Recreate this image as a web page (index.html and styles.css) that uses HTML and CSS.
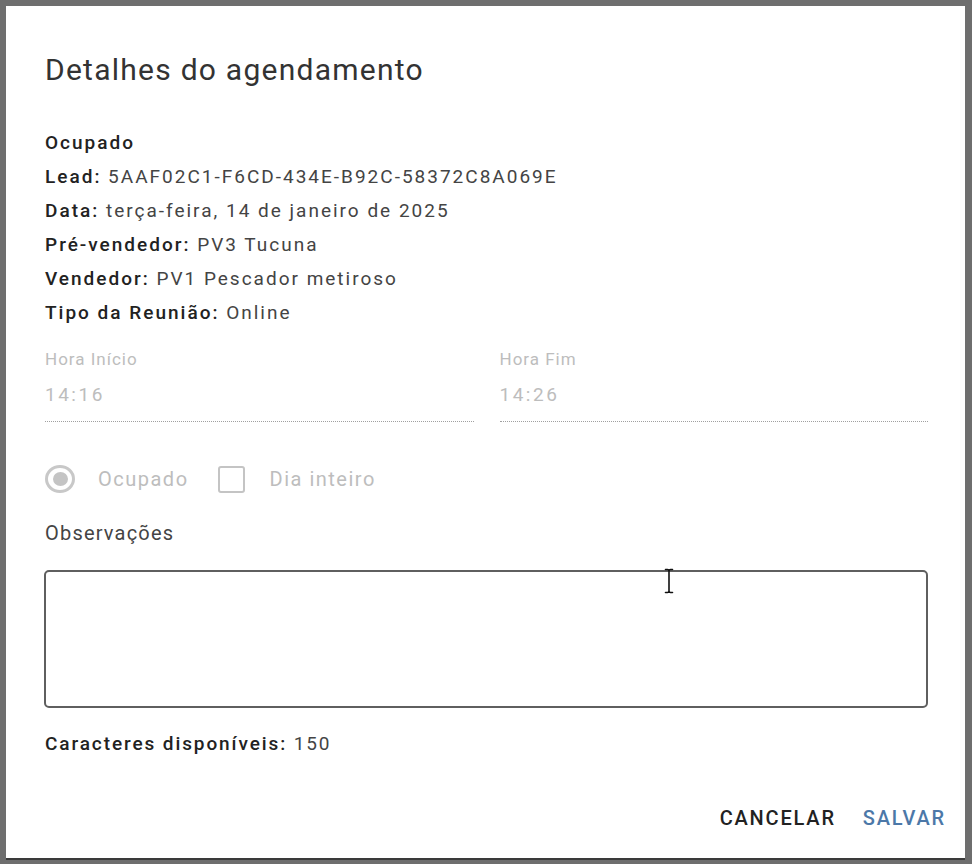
FILE: index.html
```html
<!DOCTYPE html>
<html lang="pt-BR">
<head>
<meta charset="utf-8">
<title>Detalhes do agendamento</title>
<link rel="stylesheet" href="styles.css">
</head>
<body>
<div class="dialog">
  <h1 class="title">Detalhes do agendamento</h1>
  <div class="info">
    <div class="line"><b>Ocupado</b></div>
    <div class="line"><b>Lead:</b> 5AAF02C1-F6CD-434E-B92C-58372C8A069E</div>
    <div class="line"><b>Data:</b> terça-feira, 14 de janeiro de 2025</div>
    <div class="line"><b>Pré-vendedor:</b> PV3 Tucuna</div>
    <div class="line"><b>Vendedor:</b> PV1 Pescador metiroso</div>
    <div class="line"><b>Tipo da Reunião:</b> Online</div>
  </div>
  <div class="times">
    <div class="field">
      <div class="field-label">Hora Início</div>
      <div class="field-value">14:16</div>
    </div>
    <div class="field">
      <div class="field-label">Hora Fim</div>
      <div class="field-value">14:26</div>
    </div>
  </div>
  <div class="options">
    <span class="radio"><span class="radio-dot"></span></span>
    <span class="opt-label">Ocupado</span>
    <span class="checkbox"></span>
    <span class="opt-label">Dia inteiro</span>
  </div>
  <div class="obs-label">Observações</div>
  <div class="textarea">
    <svg class="ibeam" width="10" height="26" viewBox="0 0 10 26" aria-hidden="true">
      <path d="M1.5 1.5 H3.5 Q5 1.5 5 3 V23 Q5 24.5 3.5 24.5 H1.5 M8.5 1.5 H6.5 Q5 1.5 5 3 M5 23 Q5 24.5 6.5 24.5 H8.5" fill="none" stroke="#111" stroke-width="1.6" stroke-linecap="round"/>
    </svg>
  </div>
  <div class="counter"><b>Caracteres disponíveis:</b> 150</div>
  <div class="actions">
    <span class="btn">CANCELAR</span>
    <span class="btn btn-primary">SALVAR</span>
  </div>
</div>
</body>
</html>
```
FILE: styles.css
```css
html, body {
  margin: 0;
  padding: 0;
}
body {
  background: #6e6e6e;
  padding: 6px;
  width: 972px;
  height: 864px;
  box-sizing: border-box;
  font-family: Roboto, "Liberation Sans", sans-serif;
}
.dialog {
  width: 959px;
  height: 852px;
  background: #fff;
  box-sizing: border-box;
  padding: 0 0 0 39px;
  display: flex;
  flex-direction: column;
  color: rgba(0, 0, 0, 0.87);
  box-shadow: 0 2px 0 #3a3a3a;
}
.title {
  margin: 46px 0 0 0;
  font-size: 30px;
  letter-spacing: 1.25px;
  font-weight: 400;
  line-height: 36px;
  color: #333;
}
.info {
  margin-top: 38px;
  font-size: 19px;
  letter-spacing: 2px;
  line-height: 34px;
  color: #444;
}
.info b {
  font-weight: 500;
  color: #222;
}
.times {
  display: flex;
  gap: 26px;
  margin-top: 19px;
  width: 883px;
}
.field {
  flex: 1;
  border-bottom: 1px dotted #a0a0a0;
  padding-bottom: 14px;
}
.field-label {
  font-size: 17px;
  letter-spacing: 1px;
  line-height: 20px;
  color: #bdbdbd;
}
.field-value {
  margin-top: 14px;
  font-size: 19px;
  letter-spacing: 2.5px;
  line-height: 24px;
  color: #bdbdbd;
}
.options {
  display: flex;
  align-items: center;
  margin-top: 41px;
  height: 32px;
  color: #bdbdbd;
  font-size: 20px;
  letter-spacing: 1.5px;
}
.radio {
  width: 30px;
  height: 28px;
  border: 3px solid #c8c8c8;
  border-radius: 50%;
  box-sizing: border-box;
  display: flex;
  align-items: center;
  justify-content: center;
}
.radio-dot {
  width: 15px;
  height: 14px;
  border-radius: 50%;
  background: #c4c4c4;
}
.opt-label {
  margin-left: 23px;
}
.checkbox {
  width: 27px;
  height: 27px;
  box-sizing: border-box;
  border: 2px solid #c4c4c4;
  border-radius: 3px;
  margin-left: 29px;
}
.options .checkbox + .opt-label {
  margin-left: 25px;
}
.obs-label {
  margin-top: 26px;
  font-size: 20px;
  letter-spacing: 1.2px;
  line-height: 24px;
  color: #444;
}
.textarea {
  position: relative;
  margin-top: 25px;
  width: 884px;
  height: 138px;
  border: 2px solid #5f5f5f;
  border-radius: 5px;
  box-sizing: border-box;
  margin-left: -1px;
}
.ibeam {
  position: absolute;
  left: 618px;
  top: -4px;
}
.counter {
  margin-top: 24px;
  font-size: 19px;
  letter-spacing: 1.9px;
  line-height: 24px;
  color: #444;
}
.counter b {
  font-weight: 500;
  color: #222;
}
.actions {
  display: flex;
  justify-content: flex-end;
  gap: 27px;
  margin-top: 50px;
  padding-right: 19px;
  font-size: 20px;
  line-height: 24px;
  letter-spacing: 1.8px;
}
.btn {
  color: #222;
  font-weight: 500;
}
.btn-primary {
  color: #4c78a8;
}
```
